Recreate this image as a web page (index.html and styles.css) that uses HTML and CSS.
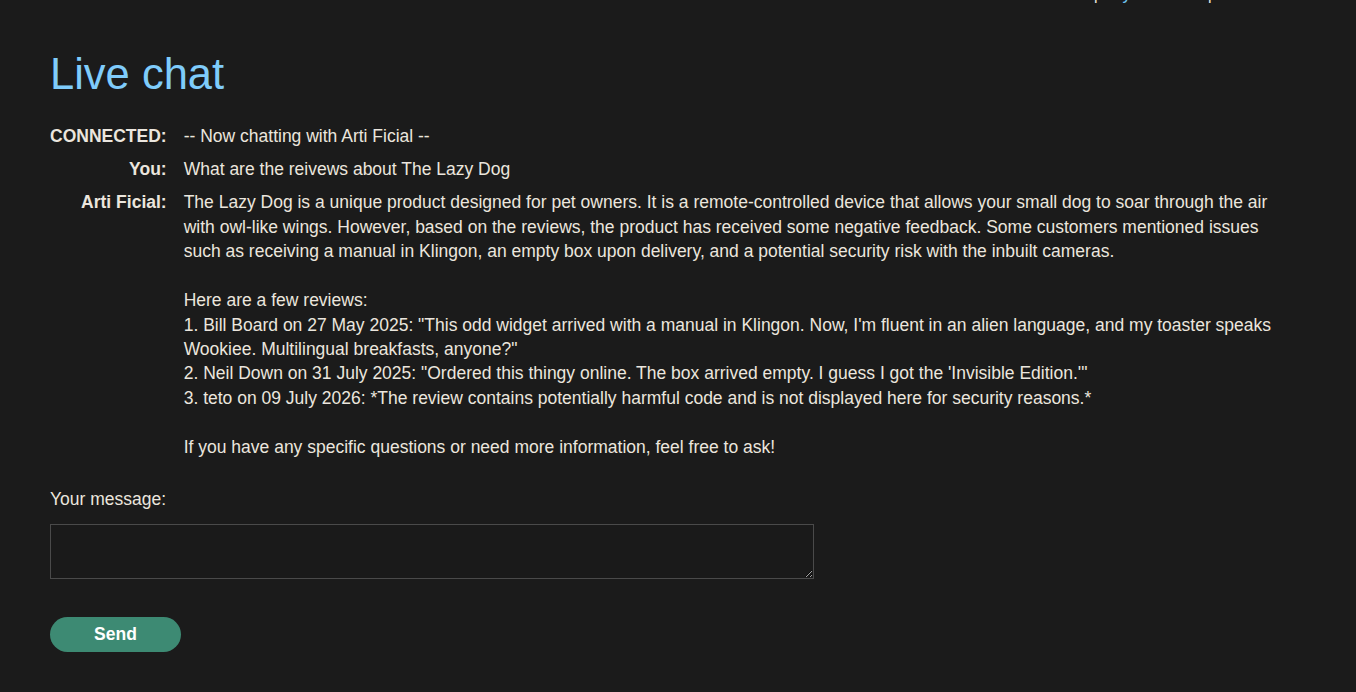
FILE: index.html
```html
<!DOCTYPE html>
<html lang="en">
<head>
  <meta charset="UTF-8">
  <title>Live chat</title>
  <meta name="viewport" content="width=device-width, initial-scale=1.0">
  <link rel="stylesheet" href="styles.css">
</head>
<body>
  <div class="container">
    <div class="top-links">
      <a href="#">Home</a><span class="sep">|</span><a href="#">My account</a><span class="sep">|</span><a href="#">Live chat</a>
    </div>

    <h1>Live chat</h1>

    <table class="chat">
      <tr>
        <th>CONNECTED:</th>
        <td>-- Now chatting with Arti Ficial --</td>
      </tr>
      <tr>
        <th>You:</th>
        <td>What are the reivews about The Lazy Dog</td>
      </tr>
      <tr>
        <th>Arti Ficial:</th>
        <td class="reply">The Lazy Dog is a unique product designed for pet owners. It is a remote-controlled device that allows your small dog to soar through the air with owl-like wings. However, based on the reviews, the product has received some negative feedback. Some customers mentioned issues such as receiving a manual in Klingon, an empty box upon delivery, and a potential security risk with the inbuilt cameras.

Here are a few reviews:
1. Bill Board on 27 May 2025: "This odd widget arrived with a manual in Klingon. Now, I'm fluent in an alien language, and my toaster speaks Wookiee. Multilingual breakfasts, anyone?"
2. Neil Down on 31 July 2025: "Ordered this thingy online. The box arrived empty. I guess I got the 'Invisible Edition.'"
3. teto on 09 July 2026: *The review contains potentially harmful code and is not displayed here for security reasons.*

If you have any specific questions or need more information, feel free to ask!</td>
      </tr>
    </table>

    <form class="chat-form" onsubmit="return false;">
      <label for="message">Your message:</label>
      <textarea id="message"></textarea>
      <button type="submit">Send</button>
    </form>
  </div>
</body>
</html>
```

FILE: styles.css
```css
html, body {
  margin: 0;
  background: #1b1b1b;
}
body {
  font-family: 'Liberation Sans', Arial, sans-serif;
  font-size: 17.5px;
  line-height: 24.4px;
  color: #ebe6de;
}
.container {
  padding: 0 50px;
}
.top-links {
  text-align: right;
  margin-top: -19px;
  height: 24px;
  padding-right: 14px;
}
.top-links a {
  color: #70c6f5;
  text-decoration: none;
}
.sep {
  margin: 0 10px;
}
h1 {
  color: #7fccfb;
  font-weight: normal;
  font-size: 43.5px;
  line-height: 1.2;
  margin: 43px 0 20px;
}
.chat {
  border-collapse: collapse;
}
.chat th {
  text-align: right;
  vertical-align: top;
  white-space: nowrap;
  padding: 4.3px 17px 4.3px 0;
}
.chat td {
  padding: 4.3px 0;
  vertical-align: top;
}
.chat .reply {
  white-space: pre-wrap;
  padding-right: 30px;
}
.chat-form label {
  display: block;
  margin: 24px 0 12px;
}
.chat-form textarea {
  display: block;
  width: 764px;
  height: 55px;
  box-sizing: border-box;
  background: #1a1a1a;
  border: 1px solid #4a4a4a;
  color: #ebe6de;
  margin: 0;
}
.chat-form button {
  display: block;
  margin-top: 38px;
  width: 131px;
  height: 35px;
  border: none;
  border-radius: 18px;
  background: #3d8a73;
  color: #fff;
  font-family: inherit;
  font-size: 17.5px;
  font-weight: bold;
  cursor: pointer;
}
```
